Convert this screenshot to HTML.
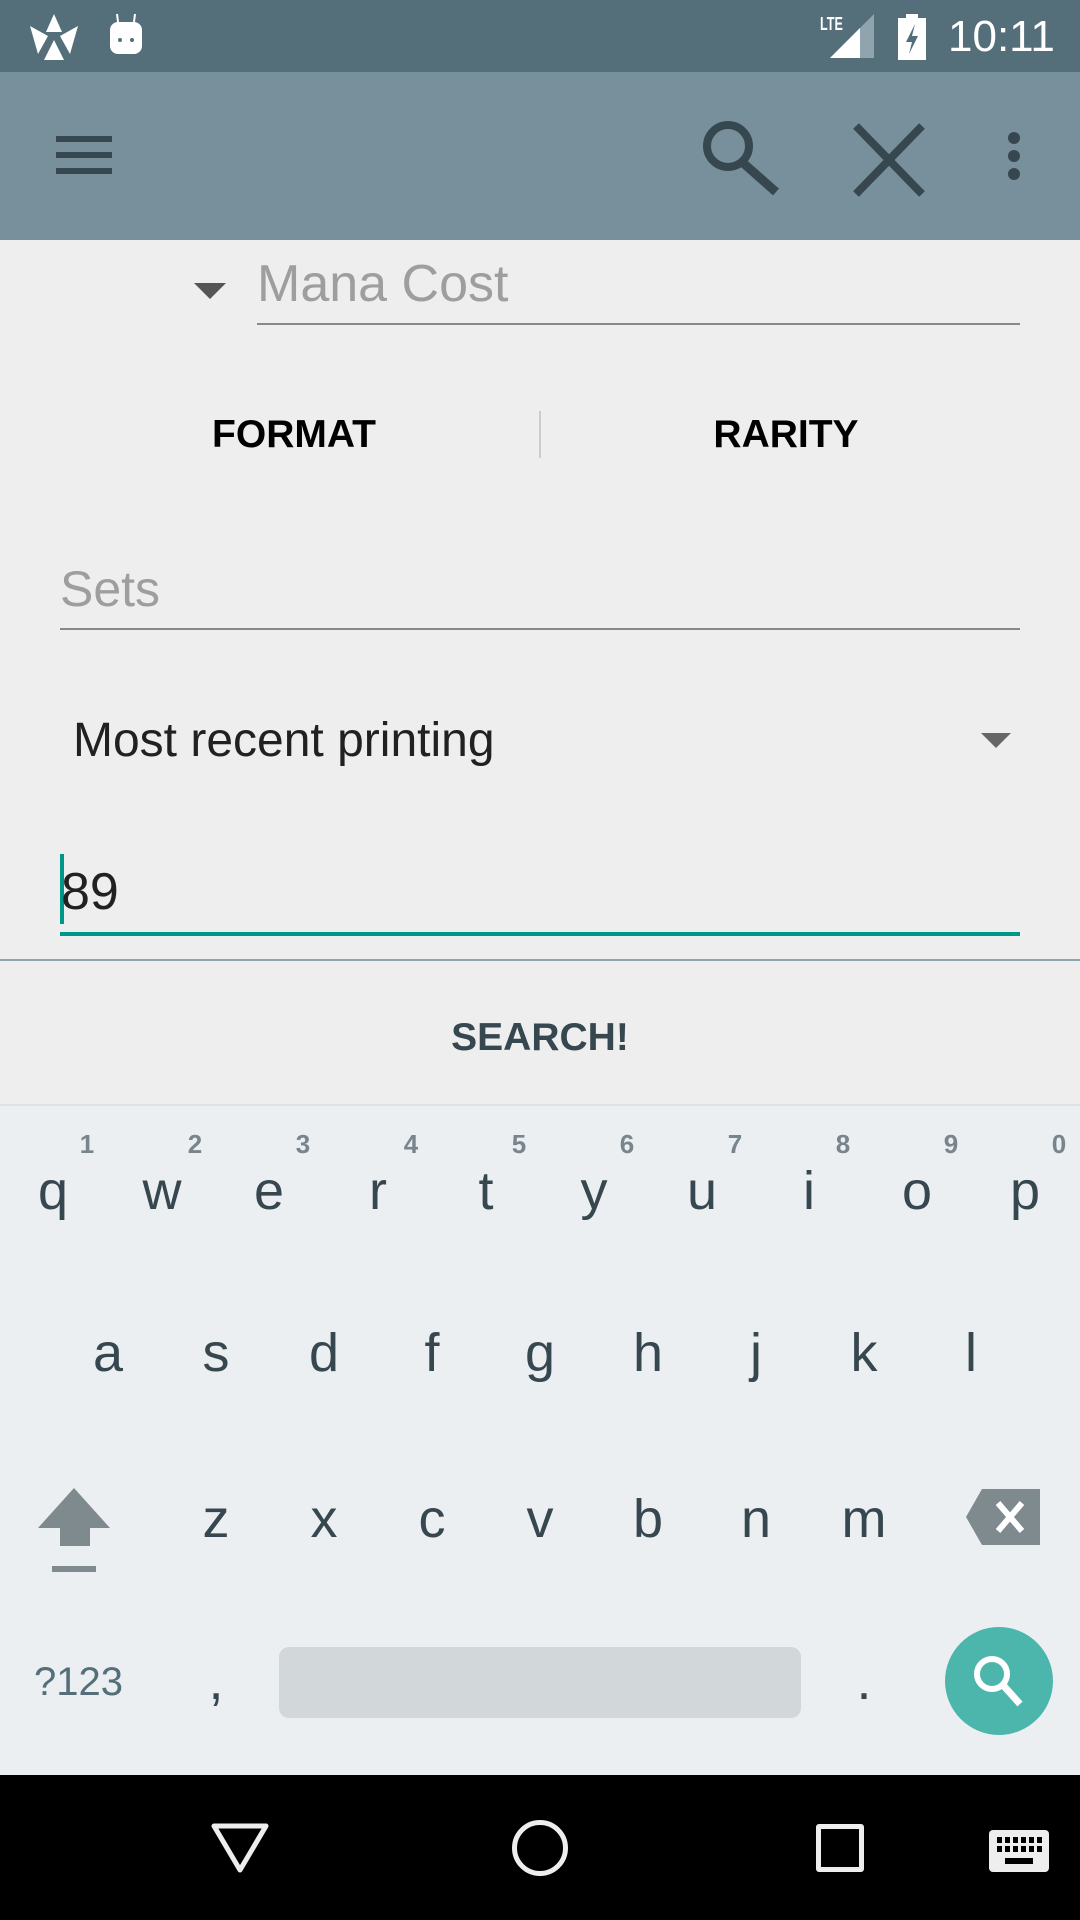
<!DOCTYPE html>
<html><head><meta charset="utf-8"><style>
*{margin:0;padding:0;box-sizing:border-box}
body{width:1080px;height:1920px;position:relative;overflow:hidden;background:#EEEEEE;font-family:"Liberation Sans",sans-serif}
.a{position:absolute}
.k{position:absolute;width:100px;margin-left:-50px;text-align:center;font-size:54px;color:#37474F;line-height:1}
.n{position:absolute;width:40px;margin-left:-20px;text-align:center;font-size:26px;font-weight:bold;color:#78858C;line-height:1}
</style></head><body>
<div class="a" style="left:0;top:0;width:1080px;height:72px;background:#546E7A"></div>
<svg class="a" style="left:28px;top:14px" width="52" height="46" viewBox="0 0 52 46"><polygon points="26,0 18,18 34,18" fill="#fff"/><polygon points="2,12 20,22 10,40" fill="#fff"/><polygon points="50,12 32,22 42,40" fill="#fff"/><polygon points="26,26 16,46 36,46" fill="#fff"/></svg>
<svg class="a" style="left:106px;top:12px" width="40" height="44"><rect x="4" y="10" width="32" height="32" rx="8" fill="#fff"/><circle cx="14" cy="28" r="2" fill="#546E7A"/><circle cx="26" cy="28" r="2" fill="#546E7A"/><line x1="11" y1="2" x2="12" y2="10" stroke="#fff" stroke-width="2"/><line x1="29" y1="2" x2="28" y2="10" stroke="#fff" stroke-width="2"/></svg>
<div class="a" style="left:820px;top:14px;font-size:18px;font-weight:bold;color:#fff;transform:scaleX(.7);transform-origin:left">LTE</div>
<svg class="a" style="left:830px;top:14px" width="46" height="44"><polygon points="44,0 44,44 0,44" fill="#90A4AE"/><polygon points="30,14 30,44 0,44" fill="#fff"/></svg>
<svg class="a" style="left:898px;top:14px" width="30" height="46"><rect x="0" y="4" width="28" height="42" fill="#fff"/><rect x="8" y="0" width="12" height="6" fill="#fff"/><polygon points="17,10 8,28 14,28 11,40 20,22 14,22" fill="#546E7A"/></svg>
<div class="a" style="left:948px;top:12px;font-size:44px;color:#fff">10:11</div>
<div class="a" style="left:0;top:72px;width:1080px;height:168px;background:#78909C"></div>
<div class="a" style="left:56px;top:136px;width:56px;height:6px;background:#37474F"></div>
<div class="a" style="left:56px;top:152px;width:56px;height:6px;background:#37474F"></div>
<div class="a" style="left:56px;top:168px;width:56px;height:6px;background:#37474F"></div>
<svg class="a" style="left:700px;top:118px" width="90" height="80"><circle cx="28" cy="28" r="21" fill="none" stroke="#37474F" stroke-width="8"/><line x1="42" y1="44" x2="76" y2="74" stroke="#37474F" stroke-width="9"/></svg>
<svg class="a" style="left:850px;top:122px" width="80" height="76"><path d="M6 4L72 72M72 4L6 72" stroke="#37474F" stroke-width="8"/></svg>
<svg class="a" style="left:1004px;top:130px" width="20" height="52"><circle cx="10" cy="8" r="6" fill="#37474F"/><circle cx="10" cy="26" r="6" fill="#37474F"/><circle cx="10" cy="44" r="6" fill="#37474F"/></svg>
<svg class="a" style="left:194px;top:283px" width="32" height="16"><polygon points="0,0 32,0 16,16" fill="#555"/></svg>
<div class="a" style="left:257px;top:254px;font-size:52px;color:#9E9E9E">Mana Cost</div>
<div class="a" style="left:257px;top:323px;width:763px;height:2px;background:#888"></div>
<div class="a" style="left:0;top:413px;width:588px;text-align:center;font-size:39px;font-weight:bold;color:#000">FORMAT</div>
<div class="a" style="left:539px;top:411px;width:2px;height:47px;background:#ccc"></div>
<div class="a" style="left:540px;top:413px;width:492px;text-align:center;font-size:39px;font-weight:bold;color:#000">RARITY</div>
<div class="a" style="left:60px;top:560px;font-size:50px;color:#9E9E9E">Sets</div>
<div class="a" style="left:60px;top:628px;width:960px;height:2px;background:#888"></div>
<div class="a" style="left:73px;top:713px;font-size:48px;color:#212121">Most recent printing</div>
<svg class="a" style="left:981px;top:733px" width="30" height="15"><polygon points="0,0 30,0 15,15" fill="#666"/></svg>
<div class="a" style="left:60px;top:854px;width:4px;height:70px;background:#009688"></div>
<div class="a" style="left:61px;top:862px;font-size:52px;color:#212121">89</div>
<div class="a" style="left:60px;top:932px;width:960px;height:4px;background:#009688"></div>
<div class="a" style="left:0;top:959px;width:1080px;height:2px;background:#90A4AE"></div>
<div class="a" style="left:0;top:1016px;width:1080px;text-align:center;font-size:39px;font-weight:bold;color:#37474F">SEARCH!</div>
<div class="a" style="left:0;top:1104px;width:1080px;height:671px;background:#ECEFF1;border-top:2px solid #dde2e5"></div>
<div class="k" style="left:53px;top:1164px">q</div><div class="k" style="left:162px;top:1164px">w</div><div class="k" style="left:269px;top:1164px">e</div><div class="k" style="left:378px;top:1164px">r</div><div class="k" style="left:486px;top:1164px">t</div><div class="k" style="left:594px;top:1164px">y</div><div class="k" style="left:702px;top:1164px">u</div><div class="k" style="left:809px;top:1164px">i</div><div class="k" style="left:917px;top:1164px">o</div><div class="k" style="left:1025px;top:1164px">p</div>
<div class="n" style="left:87px;top:1131px">1</div><div class="n" style="left:195px;top:1131px">2</div><div class="n" style="left:303px;top:1131px">3</div><div class="n" style="left:411px;top:1131px">4</div><div class="n" style="left:519px;top:1131px">5</div><div class="n" style="left:627px;top:1131px">6</div><div class="n" style="left:735px;top:1131px">7</div><div class="n" style="left:843px;top:1131px">8</div><div class="n" style="left:951px;top:1131px">9</div><div class="n" style="left:1059px;top:1131px">0</div>
<div class="k" style="left:108px;top:1326px">a</div><div class="k" style="left:216px;top:1326px">s</div><div class="k" style="left:324px;top:1326px">d</div><div class="k" style="left:432px;top:1326px">f</div><div class="k" style="left:540px;top:1326px">g</div><div class="k" style="left:648px;top:1326px">h</div><div class="k" style="left:756px;top:1326px">j</div><div class="k" style="left:864px;top:1326px">k</div><div class="k" style="left:971px;top:1326px">l</div>
<div class="k" style="left:216px;top:1492px">z</div><div class="k" style="left:324px;top:1492px">x</div><div class="k" style="left:432px;top:1492px">c</div><div class="k" style="left:540px;top:1492px">v</div><div class="k" style="left:648px;top:1492px">b</div><div class="k" style="left:756px;top:1492px">n</div><div class="k" style="left:864px;top:1492px">m</div>
<svg class="a" style="left:38px;top:1488px" width="74" height="86"><polygon points="36,0 72,40 52,40 52,58 22,58 22,40 0,40" fill="#7F8A8F"/><rect x="14" y="78" width="44" height="6" fill="#7F8A8F"/></svg>
<svg class="a" style="left:966px;top:1489px" width="74" height="56"><polygon points="16,0 74,0 74,56 16,56 0,28" fill="#7F8A8F" stroke-linejoin="round"/><path d="M32 14L56 42M56 14L32 42" stroke="#fff" stroke-width="6"/></svg>
<div class="a" style="left:34px;top:1660px;font-size:40px;color:#546E7A">?123</div>
<div class="k" style="left:216px;top:1654px">,</div>
<div class="a" style="left:279px;top:1647px;width:522px;height:71px;border-radius:10px;background:#D2D7DA"></div>
<div class="k" style="left:864px;top:1654px">.</div>
<div class="a" style="left:945px;top:1627px;width:108px;height:108px;border-radius:50%;background:#4DB6AC"></div>
<svg class="a" style="left:968px;top:1650px" width="64" height="64"><circle cx="24" cy="24" r="15" fill="none" stroke="#fff" stroke-width="6"/><line x1="34" y1="34" x2="52" y2="54" stroke="#fff" stroke-width="7"/></svg>
<div class="a" style="left:0;top:1775px;width:1080px;height:145px;background:#000"></div>
<svg class="a" style="left:210px;top:1822px" width="60" height="52"><polygon points="4,4 56,4 30,48" fill="none" stroke="#eee" stroke-width="5" stroke-linejoin="round"/></svg>
<div class="a" style="left:512px;top:1820px;width:56px;height:56px;border-radius:50%;border:5px solid #eee"></div>
<div class="a" style="left:816px;top:1824px;width:48px;height:48px;border:5px solid #eee;border-radius:3px"></div>
<svg class="a" style="left:989px;top:1830px" width="60" height="42"><rect width="60" height="42" rx="4" fill="#eee"/><g fill="#000"><rect x="8" y="7" width="5" height="6"/><rect x="16" y="7" width="5" height="6"/><rect x="24" y="7" width="5" height="6"/><rect x="32" y="7" width="5" height="6"/><rect x="40" y="7" width="5" height="6"/><rect x="48" y="7" width="5" height="6"/><rect x="8" y="16" width="5" height="6"/><rect x="16" y="16" width="5" height="6"/><rect x="24" y="16" width="5" height="6"/><rect x="32" y="16" width="5" height="6"/><rect x="40" y="16" width="5" height="6"/><rect x="48" y="16" width="5" height="6"/><rect x="16" y="28" width="28" height="6"/></g></svg>
</body></html>
